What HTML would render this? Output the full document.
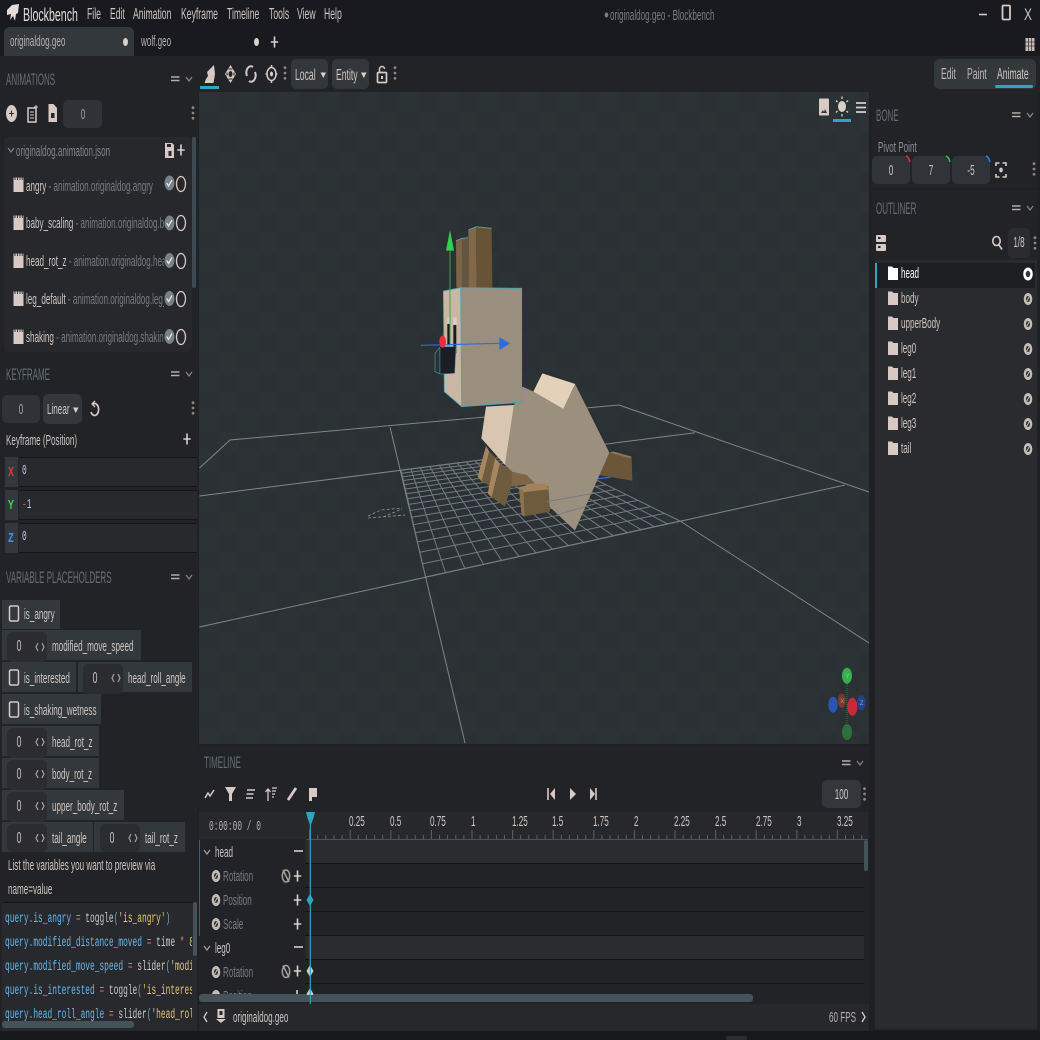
<!DOCTYPE html>
<html><head><meta charset="utf-8"><style>
html,body{margin:0;padding:0;width:1040px;height:1040px;overflow:hidden;background:#1e2023}
*{box-sizing:border-box}
.b{position:absolute}
.t{position:absolute;white-space:nowrap;height:20px;margin-top:1px;font:16px/20px "Liberation Sans",sans-serif;color:#cfc6c0;transform:scaleX(.54);transform-origin:0 0}
.h{margin-top:0;font-size:17px;color:#666e74;transform:scaleX(.47)}
.g{color:#757c81}
.s{font-size:15px}
.c{text-align:center;width:40px;transform-origin:50% 0}
.m{margin-top:2px;font:13.5px/20px "Liberation Mono",monospace;transform:scaleX(.583)}
.q{color:#6cb6e8}.o{color:#e0707c}.f{color:#c9c9c6}.p{color:#6fa9b8}.y{color:#e3c578}
</style></head><body>
<div class="b" style="left:0;top:0;width:1040px;height:56px;background:#181a1f"></div>
<div class="b" style="left:4px;top:27px;width:130px;height:29px;background:#33383d;border-radius:6px 6px 0 0"></div>
<div class="b" style="left:0;top:56px;width:1040px;height:36px;background:#212326"></div>
<div class="b" style="left:0;top:92px;width:198px;height:940px;background:#212326"></div>
<div class="b" style="left:199px;top:92px;width:670px;height:652px;background-color:#2a3033;background-image:repeating-conic-gradient(#2a3033 0 25%,#2c3334 0 50%);background-size:40px 40px;background-position:0 0"></div>
<div class="b" style="left:199px;top:746px;width:670px;height:286px;background:#212326"></div>
<div class="b" style="left:871px;top:92px;width:166px;height:96px;background:#212326"></div>
<div class="b" style="left:871px;top:190px;width:166px;height:70px;background:#212326"></div>
<div class="b" style="left:875px;top:260px;width:162px;height:769px;background:#292b2e"></div>
<div class="b" style="left:875px;top:263px;width:160px;height:25px;background:#1c1e21"></div>
<div class="b" style="left:875px;top:263px;width:2px;height:25px;background:#2ea6c0"></div>

<div class="b" style="left:291px;top:59px;width:37px;height:30px;background:#33373b;border-radius:5px"></div>
<div class="b" style="left:332px;top:59px;width:37px;height:30px;background:#33373b;border-radius:5px"></div>
<div class="b" style="left:934px;top:59px;width:102px;height:30px;background:#33383b;border-radius:5px"></div>
<div class="b" style="left:995px;top:85px;width:38px;height:3px;background:#2ea6c0;border-radius:2px"></div>
<div class="b" style="left:200px;top:86px;width:19px;height:3px;background:#2ea6c0"></div>
<div class="b" style="left:63px;top:100px;width:39px;height:28px;background:#2f3236;border-radius:5px"></div>
<div class="b" style="left:4px;top:137px;width:188px;height:215px;background:#26282c;border-radius:4px"></div>
<div class="b" style="left:192px;top:137px;width:4px;height:151px;background:#3e4a52;border-radius:2px"></div>

<div class="b" style="left:2px;top:395px;width:38px;height:28px;background:#2f3236;border-radius:5px"></div>
<div class="b" style="left:43px;top:394px;width:39px;height:30px;background:#33373b;border-radius:5px"></div>
<div class="b" style="left:5px;top:457px;width:13px;height:30px;background:#33383c"></div>
<div class="b" style="left:5px;top:490px;width:13px;height:30px;background:#33383c"></div>
<div class="b" style="left:5px;top:523px;width:13px;height:30px;background:#33383c"></div>
<div class="b" style="left:19px;top:457px;width:178px;height:30px;background:#27292d;border-top:1px solid #141518;border-bottom:1px solid #141518"></div>
<div class="b" style="left:19px;top:490px;width:178px;height:30px;background:#27292d;border-top:1px solid #141518;border-bottom:1px solid #141518"></div>
<div class="b" style="left:19px;top:523px;width:178px;height:30px;background:#27292d;border-top:1px solid #141518;border-bottom:1px solid #141518"></div>

<div class="b" style="left:2px;top:600px;width:58px;height:29px;background:#33383c"></div>
<div class="b" style="left:2px;top:630px;width:139px;height:30px;background:#33383c"></div>
<div class="b" style="left:2px;top:662px;width:74px;height:30px;background:#33383c"></div>
<div class="b" style="left:78px;top:662px;width:114px;height:30px;background:#33383c"></div>
<div class="b" style="left:2px;top:694px;width:99px;height:30px;background:#33383c"></div>
<div class="b" style="left:2px;top:726px;width:97px;height:30px;background:#33383c"></div>
<div class="b" style="left:2px;top:758px;width:97px;height:30px;background:#33383c"></div>
<div class="b" style="left:2px;top:790px;width:122px;height:30px;background:#33383c"></div>
<div class="b" style="left:2px;top:822px;width:91px;height:30px;background:#33383c"></div>
<div class="b" style="left:94px;top:822px;width:91px;height:30px;background:#33383c"></div>
<div class="b" style="left:7px;top:632px;width:40px;height:30px;background:#2a2c30;border-radius:5px"></div>
<div class="b" style="left:83px;top:664px;width:40px;height:30px;background:#2a2c30;border-radius:5px"></div>
<div class="b" style="left:7px;top:728px;width:40px;height:30px;background:#2a2c30;border-radius:5px"></div>
<div class="b" style="left:7px;top:760px;width:40px;height:30px;background:#2a2c30;border-radius:5px"></div>
<div class="b" style="left:7px;top:792px;width:40px;height:30px;background:#2a2c30;border-radius:5px"></div>
<div class="b" style="left:7px;top:824px;width:40px;height:28px;background:#2a2c30;border-radius:5px"></div>
<div class="b" style="left:100px;top:824px;width:40px;height:28px;background:#2a2c30;border-radius:5px"></div>

<div class="b" style="left:2px;top:902px;width:195px;height:130px;background:#27292d;border-top:1px solid #141518"></div>
<div class="b" style="left:193px;top:902px;width:4px;height:54px;background:#46525a;border-radius:2px"></div>
<div class="b" style="left:2px;top:1021px;width:132px;height:7px;background:#46525a;border-radius:3px"></div>

<div class="b" style="left:822px;top:780px;width:39px;height:28px;background:#33373b;border-radius:5px"></div>
<div class="b" style="left:199px;top:812px;width:669px;height:27px;background:#26282c"></div>
<div class="b" style="left:306px;top:839px;width:562px;height:1px;background:#4a5158"></div>
<div class="b" style="left:199px;top:840px;width:107px;height:164px;background:#212326"></div>
<div class="b" style="left:305px;top:840px;width:559px;height:23px;background:#2a2c30"></div>
<div class="b" style="left:305px;top:935px;width:559px;height:24px;background:#2a2c30"></div>
<div class="b" style="left:305px;top:863px;width:559px;height:1px;background:#121316"></div>
<div class="b" style="left:305px;top:887px;width:559px;height:1px;background:#121316"></div>
<div class="b" style="left:305px;top:911px;width:559px;height:1px;background:#121316"></div>
<div class="b" style="left:305px;top:935px;width:559px;height:1px;background:#121316"></div>
<div class="b" style="left:305px;top:959px;width:559px;height:1px;background:#121316"></div>
<div class="b" style="left:305px;top:983px;width:559px;height:1px;background:#121316"></div>
<div class="b" style="left:199px;top:840px;width:1px;height:96px;background:#1f6c7c"></div>
<div class="b" style="left:864px;top:840px;width:4px;height:31px;background:#46525a;border-radius:2px"></div>
<div class="b" style="left:199px;top:1004px;width:670px;height:27px;background:#26282c"></div>
<div class="b" style="left:0;top:1031px;width:1040px;height:9px;background:#17181b"></div>
<div class="b" style="left:726px;top:1036px;width:21px;height:4px;background:#2a2c2f;border-radius:2px 2px 0 0"></div>
<div class="b" style="left:872px;top:156px;width:38px;height:28px;background:#303337;border-radius:5px"></div>
<div class="b" style="left:912px;top:156px;width:38px;height:28px;background:#303337;border-radius:5px"></div>
<div class="b" style="left:952px;top:156px;width:38px;height:28px;background:#303337;border-radius:5px"></div>
<div class="b" style="left:1008px;top:228px;width:22px;height:30px;background:#2a2c30;border-radius:5px"></div>

<svg class="b" style="left:0;top:0" width="1040" height="1040" viewBox="0 0 1040 1040">
<defs>
<g id="dots" fill="#8d8580"><circle cx="0" cy="-5.300" r="1.400"/><circle cx="0" cy="0" r="1.400"/><circle cx="0" cy="5.300" r="1.400"/></g>
<g id="hd" fill="none" stroke="#b5aca6"><path d="M0-2H8.500M0 1.500H8.500" stroke-width="1.600"/><path d="M15-2l3 4L21-2" stroke-width="1.200" stroke="#8d8680"/></g>
<path id="plus" d="M-3.700 0H3.700M0-5.500V5.500" stroke="#d8d0ca" stroke-width="1.600" fill="none"/>
<g id="chk"><ellipse rx="5" ry="7.500" fill="#788188"/><path d="M-2.800 0l1.800 3 3.500-6" stroke="#dfe3e4" stroke-width="1.300" fill="none"/></g>
<ellipse id="rng" rx="4.500" ry="7.500" fill="none" stroke="#d8c9c4" stroke-width="1.300"/>
<g id="clap"><rect x="-5" y="-6.500" width="10" height="14.500" fill="#d8c9c4"/><path d="M-3.500-7v3M-1-7v3M1.500-7v3M3.800-7v3" stroke="#26282c" stroke-width=".9"/></g>
<g id="eyeb"><ellipse rx="4.300" ry="6" fill="#c5bdb7"/><ellipse rx="2.100" ry="3" fill="#33363a"/><path d="M-1.300 2L1.500-2.500" stroke="#c5bdb7"/></g>
<path id="fold" d="M0-6.500H4L5.500-5H10V7H0Z" fill="#d8c9c4"/>
<rect id="cb" x="-4.500" y="-7.500" width="9" height="15" rx="1.500" fill="none" stroke="#d8c9c4" stroke-width="1.500"/>
<path id="ang" d="M-2-4l-2 4 2 4M2-4l2 4-2 4" stroke="#a8a09b" stroke-width="1.200" fill="none"/>
</defs>

<g fill="none" stroke="#7f8686" stroke-width="1">
<path d="M199.500 468L230 440L619 405L869 492"/>
<path d="M199.500 496L695 432.700"/>
<path d="M199.500 627L845 485"/>
<path d="M390 427L465 743"/>
<path d="M680 521L869 643"/>
<path d="M368 516L381 510L402 508M368 518L405 515M383 517L402 509" stroke="#8f9596" stroke-dasharray="3 2" stroke-width=".8"/>
</g>
<g id="grid" fill="none" stroke="#717b80" stroke-width="1"></g>

<g transform="translate(380 210) scale(.33333)">
<polygon points="318,708 293,800 305,815 328,725" fill="#a5865f"/>
<polygon points="328,725 305,815 335,830 350,745" fill="#6e5a3c"/>
<polygon points="345,745 323,850 335,862 360,760" fill="#a5865f"/>
<polygon points="360,760 335,862 375,890 385,855 410,790" fill="#6e5a3c"/>
<polygon points="688,728 755,742 757,812 655,795" fill="#6b5638"/>
<polygon points="688,728 700,724 755,740 750,745" fill="#8c7450"/>
<path d="M650 806L692 802" stroke="#2d6be0" stroke-width="4"/>
<polygon points="402,585 428,530 460,545 550,597 586,524 688,728 585,962 375,765" fill="#9b8f7e"/>
<polygon points="318,590 402,585 375,765 304,685" fill="#d8c6b0"/>
<polygon points="487,490 586,522 550,597 460,545" fill="#e3d2b9"/>
<polygon points="395,785 440,795 465,820 430,825 395,830" fill="#7d6545"/>
<polygon points="417,835 505,828 510,905 430,920" fill="#6e5a3c"/>
<polygon points="417,834 440,825 495,820 507,838 420,848" fill="#a0835d"/>
<polygon points="417,835 430,840 434,920 425,915" fill="#8c7350"/>
<path d="M500 875L640 850M530 915L650 880" stroke="#717b80" stroke-width="2.500" fill="none"/>
<polygon points="228,92 247,85 247,233 229,233" fill="#7a6548"/>
<polygon points="247,85 264,83 266,233 247,233" fill="#655540"/>
<polygon points="265,60 288,50 290,233 266,232" fill="#806848"/>
<polygon points="288,50 335,55 337,233 290,233" fill="#675335"/>
<path d="M228 92L247 85L264 83M265 60L288 50L335 55" stroke="#4ca5b5" stroke-width="2.500" fill="none"/>
<polygon points="190,243 242,233 245,590 193,545" fill="#c9b7a3"/>
<polygon points="242,233 425,235 425,577 245,590" fill="#9a8f7e"/>
<path d="M190 243L242 233L425 235L425 577L245 590L193 545ZM242 233L245 590" stroke="#44a8ba" stroke-width="2.500" fill="none"/>
<rect x="202" y="322" width="8" height="22" fill="#cfcfcf"/><rect x="202" y="342" width="8" height="64" fill="#191b1f"/>
<rect x="220" y="322" width="10" height="24" fill="#cfcfcf"/><rect x="220" y="345" width="9" height="85" fill="#191b1f"/>
<polygon points="165,430 180,412 180,492 165,485" fill="#2a3236" stroke="#3a97a8" stroke-width="2"/>
<polygon points="180,410 228,410 224,490 180,492" fill="#1b1e23" stroke="#3a97a8" stroke-width="1.500"/>
<path d="M210 120V400" stroke="#2fae45" stroke-width="3"/>
<polygon points="210,60 198,122 222,122" fill="#2fd24e"/>
<path d="M122 406L360 400" stroke="#2d6be0" stroke-width="3.500"/>
<polygon points="358,382 390,400 358,420" fill="#2d6be0"/>
<ellipse cx="188" cy="395" rx="10" ry="18" fill="#ee2c40"/>
</g>

<g>
<path d="M847 684V724" stroke="#2e7a3a" stroke-width="1" stroke-dasharray="1 1"/>
<ellipse cx="847" cy="675.700" rx="5" ry="8" fill="#35b04a"/>
<ellipse cx="847" cy="732" rx="5" ry="8" fill="#2f6f3a"/>
<ellipse cx="833" cy="704.700" rx="4.700" ry="8" fill="#2b56b0"/>
<ellipse cx="861.300" cy="702.700" rx="4.300" ry="7.500" fill="#25418c"/>
<ellipse cx="841.700" cy="700.700" rx="4" ry="7" fill="#7a3a30"/>
<ellipse cx="852.300" cy="706.700" rx="5" ry="9" fill="#c42a3a"/>
<text x="845.500" y="678" font-family="Liberation Sans" font-size="6" fill="#8fcb9c">Y</text>
<text x="859.800" y="705" font-family="Liberation Sans" font-size="6" fill="#8fa3d8">Z</text>
<text x="840.300" y="703" font-family="Liberation Sans" font-size="6" fill="#b8988a">X</text>
</g>

<!-- title bar icons -->
<path d="M7 10l5-5 7-1-1 9-2 1-1 7-2-5-3 4 1-6-4 1z" fill="#e4dcd8"/>
<path d="M979 14.500H987" stroke="#d8c9c4" stroke-width="1.600"/>
<rect x="1002.500" y="5.500" width="7.500" height="14" rx="1" fill="none" stroke="#d8c9c4" stroke-width="1.800"/>
<ellipse cx="125.500" cy="42" rx="2.500" ry="4" fill="#d8d0ca"/>
<ellipse cx="256.500" cy="42" rx="2.500" ry="4" fill="#d8d0ca"/>
<use href="#plus" x="274.500" y="42"/>
<ellipse cx="606.500" cy="15" rx="1.800" ry="2.500" fill="#777f85"/>
<g fill="#c9bcb6"><rect x="1025.500" y="38" width="9" height="13"/><path d="M1028.500 38v13M1031.500 38v13M1025.500 42h9M1025.500 46h9" stroke="#3a3a3e" stroke-width=".8"/></g>

<!-- toolbar icons -->
<path d="M204.500 83h9l1.500-9-1-9-4 4-3 3 1 4-2 3z" fill="#d8c9c4"/>
<g transform="translate(230.500 74)"><path d="M0-9L5.500 0L0 9L-5.500 0Z" fill="#d8c9c4"/><ellipse rx="2" ry="3" fill="#212326"/><path d="M-2-5L2-5M-2 5L2 5M-3.500-1.500V1.500M3.500-1.500V1.500" stroke="#212326"/></g>
<g transform="translate(251 74)" fill="none" stroke="#d8c9c4" stroke-width="2"><path d="M-4 2A4.500 6.500 0 0 1 2-7"/><path d="M4-2A4.500 6.500 0 0 1-2 7"/></g>
<g transform="translate(271.500 74)" fill="none" stroke="#d8c9c4" stroke-width="1.600"><ellipse rx="4.500" ry="6.500"/><ellipse rx="1.600" ry="2.500" fill="#d8c9c4" stroke="none"/><path d="M0-9V-6.500M0 6.500V9M-6 0H-4.500M4.500 0H6"/></g>
<use href="#dots" x="285" y="73"/>
<use href="#dots" x="395" y="73"/>
<path d="M320.500 72.500h5.500l-2.700 5.500zM361 72.500h5.500l-2.700 5.500z" fill="#d8d0ca"/>
<g transform="translate(382 76)"><rect x="-4.500" y="-3.500" width="9" height="10" rx="1" fill="none" stroke="#d8c9c4" stroke-width="1.700"/><path d="M-2.500-4V-7A2.500 2.500 0 0 1 2.500-7" fill="none" stroke="#d8c9c4" stroke-width="1.500"/><rect x="-1" y="0" width="2" height="3" fill="#d8c9c4"/></g>

<!-- viewport icons -->
<g transform="translate(824 107)"><rect x="-5" y="-8.500" width="10" height="17" rx="1" fill="#d8c9c4"/><path d="M-3 6L-1 3L0 5L1 2L3 6Z" fill="#33363a"/></g>
<g transform="translate(842 106.500)"><ellipse rx="4" ry="5.500" fill="#d8d0ca"/><path d="M0-10V-7.500M0 7.500V10M-6-6l1.500 1.500M6-6l-1.500 1.500M-6 6l1.500-1.500M6 6l-1.500-1.500" stroke="#d8d0ca" stroke-width="1.300"/></g>
<path d="M833 120.500H851" stroke="#2ea6c0" stroke-width="3"/>
<path d="M856 103H866M856 107.500H866M856 112H866" stroke="#d8d0ca" stroke-width="1.700"/>

<!-- heading icons -->
<use href="#hd" x="171" y="79"/><use href="#hd" x="171" y="374"/><use href="#hd" x="171" y="577"/>
<use href="#hd" x="1012" y="115"/><use href="#hd" x="1012" y="208"/><use href="#hd" x="842" y="763"/>

<!-- animations -->
<ellipse cx="11.500" cy="113.500" rx="5.500" ry="8.500" fill="#d8c9c4"/><path d="M9 113.500h5M11.500 110.500v6" stroke="#26282c" stroke-width="1"/>
<g transform="translate(32 114)"><rect x="-4" y="-6" width="8" height="14" fill="none" stroke="#d8c9c4" stroke-width="1.500"/><path d="M-2-2h4M-2 1h4M-2 4h4" stroke="#d8c9c4"/><path d="M2-7h4M4-9v4" stroke="#d8c9c4"/></g>
<path d="M48.500 104h5l3.500 4v14h-8.500z" fill="#d8c9c4"/><rect x="51" y="113" width="3.500" height="5" fill="#26282c"/>
<use href="#dots" x="193" y="113"/>
<path d="M8 148l3 4 3-4" fill="none" stroke="#7e858a" stroke-width="1.100"/>
<g transform="translate(169.500 150)"><path d="M-4.500-7h7l2 2v13h-9z" fill="#d8c9c4"/><rect x="-1" y="1" width="3" height="5" fill="#26282c"/><rect x="-2.500" y="-6" width="4" height="3" fill="#26282c"/></g>
<use href="#plus" x="181" y="150"/>
<use href="#clap" x="18.500" y="184"/><use href="#chk" x="169.500" y="183"/><use href="#rng" x="181" y="184"/>
<use href="#clap" x="18.500" y="222"/><use href="#chk" x="169.500" y="223"/><use href="#rng" x="181" y="223"/>
<use href="#clap" x="18.500" y="260"/><use href="#chk" x="169.500" y="260.500"/><use href="#rng" x="181" y="261"/>
<use href="#clap" x="18.500" y="298"/><use href="#chk" x="169.500" y="298.500"/><use href="#rng" x="181" y="299"/>
<use href="#clap" x="18.500" y="336"/><use href="#chk" x="169.500" y="336.500"/><use href="#rng" x="181" y="337"/>

<!-- keyframe -->
<use href="#dots" x="193" y="408"/>
<path d="M73 407.500h5.500l-2.700 5.500z" fill="#d8d0ca"/>
<g transform="translate(95 410)" fill="none" stroke="#d8c9c4" stroke-width="1.700"><path d="M-2-6A4 6 0 1 1-4 2"/><path d="M0-9L-3-6L0-3" stroke-width="1.300"/></g>
<use href="#plus" x="187" y="439"/>

<!-- variables icons -->
<use href="#cb" x="14" y="613.500"/><use href="#cb" x="14" y="677.500"/><use href="#cb" x="14" y="709.500"/>
<use href="#ang" x="40" y="647"/><use href="#ang" x="116" y="678"/><use href="#ang" x="40" y="742"/><use href="#ang" x="40" y="774"/><use href="#ang" x="40" y="806"/><use href="#ang" x="40" y="838"/><use href="#ang" x="133" y="838"/>

<!-- timeline toolbar -->
<path d="M205 798l3-5 2 3 4-6" fill="none" stroke="#d8c9c4" stroke-width="1.500"/>
<path d="M225 787h11l-4 7v7l-3 0v-7z" fill="#d8c9c4"/>
<path d="M247 790h8M246.500 794h7M246 798h7" stroke="#d8c9c4" stroke-width="1.400"/>
<path d="M268 789v12M265.500 792l2.500-3 2.500 3M272 788h5M272 791h4M272 794h3M272 797h2" stroke="#d8c9c4" stroke-width="1.300" fill="none"/>
<path d="M288 800l8-12" stroke="#d8c9c4" stroke-width="2.800"/>
<path d="M309 788h8v9h-5v4h-3z" fill="#d8c9c4"/>
<path d="M548 788v12" stroke="#d8c9c4" stroke-width="1.600"/><path d="M555 788l-5 6 5 6z" fill="#d8c9c4"/>
<path d="M570 788l6 6-6 6z" fill="#d8c9c4"/>
<path d="M596 788v12" stroke="#d8c9c4" stroke-width="1.600"/><path d="M590 788l5 6-5 6z" fill="#d8c9c4"/>
<use href="#dots" x="864.500" y="794"/>
<path id="ticks" fill="none" stroke="#5a6167"></path>

<!-- timeline rows -->
<path d="M204 850l3 4 3-4M204 946l3 4 3-4" fill="none" stroke="#a8a09b" stroke-width="1.200"/>
<path d="M294 851h9M294 947h9" stroke="#c8c0ba" stroke-width="1.700"/>
<use href="#eyeb" x="216" y="876"/><use href="#eyeb" x="216" y="900"/><use href="#eyeb" x="216" y="924"/><use href="#eyeb" x="216" y="972"/>
<use href="#plus" x="297.500" y="876"/><use href="#plus" x="297.500" y="900"/><use href="#plus" x="297.500" y="924"/><use href="#plus" x="297.500" y="971"/>
<g transform="translate(286 876)"><ellipse rx="3.700" ry="6" fill="none" stroke="#a8a09b" stroke-width="1.500"/><path d="M-3-6L3 6" stroke="#a8a09b" stroke-width="1.500"/></g>
<g transform="translate(286 971.500)"><ellipse rx="3.700" ry="6" fill="none" stroke="#a8a09b" stroke-width="1.500"/><path d="M-3-6L3 6" stroke="#a8a09b" stroke-width="1.500"/></g>
<path d="M297 990v4" stroke="#d8d0ca" stroke-width="1.600"/>
<ellipse cx="216" cy="996" rx="4.300" ry="6" fill="#c5bdb7"/>
<rect x="199" y="994" width="110" height="10" fill="#212326"/>
<rect x="199" y="994" width="554" height="8" rx="3" fill="#46525a"/>
<path d="M310 894l3.500 6-3.500 6-3.500-6z" fill="#2ea6c0"/>
<path d="M310 965l3.500 6-3.500 6-3.500-6z" fill="#d8c9c4"/>
<path d="M310 988l3.500 6-1 1h-5l-1-1z" fill="#d8c9c4"/>
<path d="M310.300 820V1004" stroke="#2ea6c0" stroke-width="1.200"/>
<path d="M306 812h9l-1.500 6-3 8-3-8z" fill="#2ea6c0"/>

<!-- status -->
<path d="M207 1012l-3 5 3 5M862 1012l3 5-3 5" fill="none" stroke="#d8d0ca" stroke-width="1.300"/>
<g transform="translate(221 1016)" fill="#d8c9c4"><rect x="-3.500" y="-7" width="7" height="9"/><rect x="-1.500" y="-5" width="3" height="4" fill="#26282c"/><path d="M-5 3h10l-5 4z"/></g>

<!-- right panel icons -->
<use href="#dots" x="1034" y="169"/><use href="#dots" x="1035" y="243"/>
<g transform="translate(1001 170)" fill="none" stroke="#d8c9c4" stroke-width="1.600"><path d="M-5-4V-7H-1.500M1.500-7H5V-4M-5 4V7H-1.500M1.500 7H5V4"/><ellipse rx="1.800" ry="2.400" fill="#d8c9c4" stroke="none"/></g>
<path d="M906 156q3 1 4 6" stroke="#e03040" stroke-width="1.500" fill="none"/>
<path d="M946 156q3 1 4 6" stroke="#35c050" stroke-width="1.500" fill="none"/>
<path d="M986 156q3 1 4 6" stroke="#3080e0" stroke-width="1.500" fill="none"/>
<rect x="876" y="235" width="10" height="7" rx="1" fill="#d8c9c4"/><rect x="876" y="244" width="10" height="7" rx="1" fill="#d8c9c4"/>
<rect x="878" y="237" width="2.500" height="2" fill="#212326"/><rect x="878" y="246" width="2.500" height="2" fill="#212326"/>
<g transform="translate(997 242)" fill="none" stroke="#d8c9c4" stroke-width="1.600"><ellipse cx="-.5" cy="-1" rx="3.700" ry="4.500"/><path d="M2 3L5 7.500"/></g>
<path transform="translate(888 273)" d="M0-6.500H4L5.500-5H10V7H0Z" fill="#fff"/>
<use href="#fold" x="888" y="298"/><use href="#fold" x="888" y="323"/><use href="#fold" x="888" y="348"/><use href="#fold" x="888" y="373"/><use href="#fold" x="888" y="398"/><use href="#fold" x="888" y="423"/><use href="#fold" x="888" y="448"/>
<g transform="translate(1028 274)"><ellipse rx="4.800" ry="6.500" fill="#fff"/><ellipse rx="2.300" ry="3.200" fill="#33363a"/></g>
<use href="#eyeb" x="1028" y="299"/><use href="#eyeb" x="1028" y="324"/><use href="#eyeb" x="1028" y="349"/><use href="#eyeb" x="1028" y="374"/><use href="#eyeb" x="1028" y="399"/><use href="#eyeb" x="1028" y="424"/><use href="#eyeb" x="1028" y="449"/>
</svg>

<!-- title text -->
<span class="t" style="left:23px;top:4px;font-size:18px;color:#e2dcd8;transform:scaleX(.59)">Blockbench</span>
<span class="t" style="left:87px;top:4px">File</span>
<span class="t" style="left:110px;top:4px">Edit</span>
<span class="t" style="left:133px;top:4px">Animation</span>
<span class="t" style="left:181px;top:4px">Keyframe</span>
<span class="t" style="left:227px;top:4px">Timeline</span>
<span class="t" style="left:269px;top:4px">Tools</span>
<span class="t" style="left:297px;top:4px">View</span>
<span class="t" style="left:324px;top:4px">Help</span>
<span class="t s" style="left:610px;top:5px;color:#777f85">originaldog.geo - Blockbench</span>
<span class="t" style="left:1024px;top:4px;font-size:17px;transform:scaleX(.7)">X</span>
<span class="t s" style="left:10px;top:31px;color:#b5b0ac">originaldog.geo</span>
<span class="t s" style="left:141px;top:31px;color:#b5b0ac">wolf.geo</span>

<span class="t" style="left:295px;top:65px">Local</span>
<span class="t" style="left:336px;top:65px">Entity</span>
<span class="t" style="left:941px;top:64px;color:#bfb8b3">Edit</span>
<span class="t" style="left:967px;top:64px;color:#bfb8b3">Paint</span>
<span class="t" style="left:997px;top:64px">Animate</span>

<span class="t h" style="left:6px;top:70px">ANIMATIONS</span>
<span class="t c s" style="left:63px;top:104px;color:#a8a29d">0</span>
<span class="t s" style="left:16px;top:141px;color:#7e858a">originaldog.animation.json</span>

<div class="b" style="left:0;top:170px;width:164px;height:180px;overflow:hidden">
<span class="t s" style="left:26px;top:6px">angry <span class="g">- animation.originaldog.angry</span></span>
<span class="t s" style="left:26px;top:43px">baby_scaling <span class="g">- animation.originaldog.baby_scaling</span></span>
<span class="t s" style="left:26px;top:81px">head_rot_z <span class="g">- animation.originaldog.head_rot_z</span></span>
<span class="t s" style="left:26px;top:119px">leg_default <span class="g">- animation.originaldog.leg_default</span></span>
<span class="t s" style="left:26px;top:157px">shaking <span class="g">- animation.originaldog.shaking</span></span>
</div>

<span class="t h" style="left:6px;top:365px">KEYFRAME</span>
<span class="t c s" style="left:2px;top:399px;width:38px;color:#a8a29d">0</span>
<span class="t s" style="left:47px;top:399px">Linear</span>
<span class="t s" style="left:6px;top:430px">Keyframe (Position)</span>
<span class="t" style="left:8px;top:462px;font:bold 14px/20px 'Liberation Mono',monospace;color:#e8303f;transform:scaleX(.7)">X</span>
<span class="t" style="left:8px;top:495px;font:bold 14px/20px 'Liberation Mono',monospace;color:#3fd14f;transform:scaleX(.7)">Y</span>
<span class="t" style="left:8px;top:528px;font:bold 14px/20px 'Liberation Mono',monospace;color:#3f8fe8;transform:scaleX(.7)">Z</span>
<span class="t m" style="left:22px;top:460px;color:#b9c6e8">0</span>
<span class="t m" style="left:22px;top:494px;color:#b9c6e8"><span style="color:#e0505c">-</span>1</span>
<span class="t m" style="left:22px;top:526px;color:#b9c6e8">0</span>

<span class="t h" style="left:6px;top:568px">VARIABLE PLACEHOLDERS</span>
<span class="t s" style="left:24px;top:604px">is_angry</span>
<span class="t s" style="left:52px;top:636px">modified_move_speed</span>
<span class="t s" style="left:24px;top:668px">is_interested</span>
<span class="t s" style="left:128px;top:668px">head_roll_angle</span>
<span class="t s" style="left:24px;top:700px">is_shaking_wetness</span>
<span class="t s" style="left:52px;top:732px">head_rot_z</span>
<span class="t s" style="left:52px;top:764px">body_rot_z</span>
<span class="t s" style="left:52px;top:796px">upper_body_rot_z</span>
<span class="t s" style="left:52px;top:828px">tail_angle</span>
<span class="t s" style="left:145px;top:828px">tail_rot_z</span>
<span class="t c" style="left:-1px;top:636px;width:40px">0</span>
<span class="t c" style="left:75px;top:668px;width:40px">0</span>
<span class="t c" style="left:-1px;top:732px;width:40px">0</span>
<span class="t c" style="left:-1px;top:764px;width:40px">0</span>
<span class="t c" style="left:-1px;top:796px;width:40px">0</span>
<span class="t c" style="left:-1px;top:828px;width:40px">0</span>
<span class="t c" style="left:92px;top:828px;width:40px">0</span>
<span class="t s" style="left:8px;top:855px">List the variables you want to preview via</span>
<span class="t s" style="left:8px;top:879px">name=value</span>

<div class="b" style="left:0;top:902px;width:192px;height:122px;overflow:hidden">
<span class="t m" style="left:5px;top:6px"><span class="q">query.is_angry</span> <span class="o">=</span> <span class="f">toggle</span><span class="p">(</span><span class="y">'is_angry'</span><span class="p">)</span></span>
<span class="t m" style="left:5px;top:30px"><span class="q">query.modified_distance_moved</span> <span class="o">=</span> <span class="f">time</span> <span class="o">*</span> <span class="y">8</span></span>
<span class="t m" style="left:5px;top:54px"><span class="q">query.modified_move_speed</span> <span class="o">=</span> <span class="f">slider</span><span class="p">(</span><span class="y">'modified_move'</span></span>
<span class="t m" style="left:5px;top:78px"><span class="q">query.is_interested</span> <span class="o">=</span> <span class="f">toggle</span><span class="p">(</span><span class="y">'is_interested'</span></span>
<span class="t m" style="left:5px;top:102px"><span class="q">query.head_roll_angle</span> <span class="o">=</span> <span class="f">slider</span><span class="p">(</span><span class="y">'head_roll_angle'</span></span>
</div>

<span class="t h" style="left:204px;top:753px">TIMELINE</span>
<span class="t c s" style="left:822px;top:784px;width:39px">100</span>
<span class="t m" style="left:209px;top:816px;color:#b5aea9">0:00:00 / 0</span>
<span class="t s" style="left:349px;top:811px">0.25</span>
<span class="t s" style="left:390px;top:811px">0.5</span>
<span class="t s" style="left:430px;top:811px">0.75</span>
<span class="t s" style="left:471px;top:811px">1</span>
<span class="t s" style="left:512px;top:811px">1.25</span>
<span class="t s" style="left:552px;top:811px">1.5</span>
<span class="t s" style="left:593px;top:811px">1.75</span>
<span class="t s" style="left:634px;top:811px">2</span>
<span class="t s" style="left:674px;top:811px">2.25</span>
<span class="t s" style="left:715px;top:811px">2.5</span>
<span class="t s" style="left:756px;top:811px">2.75</span>
<span class="t s" style="left:797px;top:811px">3</span>
<span class="t s" style="left:837px;top:811px">3.25</span>

<span class="t s" style="left:215px;top:842px">head</span>
<span class="t s g" style="left:223px;top:866px">Rotation</span>
<span class="t s g" style="left:223px;top:890px">Position</span>
<span class="t s g" style="left:223px;top:914px">Scale</span>
<span class="t s" style="left:215px;top:938px">leg0</span>
<span class="t s g" style="left:223px;top:962px">Rotation</span>
<div class="b" style="left:200px;top:984px;width:100px;height:10px;overflow:hidden"><span class="t s g" style="left:23px;top:2px">Position</span></div>
<span class="t s" style="left:233px;top:1007px">originaldog.geo</span>
<span class="t s" style="left:829px;top:1007px;color:#b5aea9">60 FPS</span>

<span class="t h" style="left:876px;top:106px">BONE</span>
<span class="t s" style="left:878px;top:137px;color:#8a8f93">Pivot Point</span>
<span class="t c s" style="left:872px;top:160px;width:38px">0</span>
<span class="t c s" style="left:912px;top:160px;width:38px">7</span>
<span class="t c s" style="left:952px;top:160px;width:38px">-5</span>
<span class="t h" style="left:876px;top:199px">OUTLINER</span>
<span class="t c s" style="left:1008px;top:232px;width:22px">1/8</span>
<span class="t s" style="left:901px;top:263px;color:#fff">head</span>
<span class="t s" style="left:901px;top:288px">body</span>
<span class="t s" style="left:901px;top:313px">upperBody</span>
<span class="t s" style="left:901px;top:338px">leg0</span>
<span class="t s" style="left:901px;top:363px">leg1</span>
<span class="t s" style="left:901px;top:388px">leg2</span>
<span class="t s" style="left:901px;top:413px">leg3</span>
<span class="t s" style="left:901px;top:438px">tail</span>

<script>
(function(){
var x0=401,y0=470,x1=540,y1=452.5,x2=680,y2=521,x3=425.5,y3=577;
var dx1=x1-x2,dx2=x3-x2,sx=x0-x1+x2-x3,dy1=y1-y2,dy2=y3-y2,sy=y0-y1+y2-y3;
var D=dx1*dy2-dx2*dy1,g=(sx*dy2-dx2*sy)/D,h=(dx1*sy-sx*dy1)/D;
var a=x1-x0+g*x1,b=x3-x0+h*x3,d=y1-y0+g*y1,e=y3-y0+h*y3;
function P(u,v){var w=g*u+h*v+1;return ((a*u+b*v+x0)/w).toFixed(1)+' '+((d*u+e*v+y0)/w).toFixed(1);}
var s='',n=16;
for(var i=0;i<=n;i++){s+='M'+P(i/n,0)+'L'+P(i/n,1)+'M'+P(0,i/n)+'L'+P(1,i/n);}
var el=document.createElementNS('http://www.w3.org/2000/svg','path');el.setAttribute('d',s);
document.getElementById('grid').appendChild(el);
var t='';
for(var k=0;k<70;k++){var x=309.6+k*8.12;if(x>866)break;t+='M'+x.toFixed(1)+' '+(k%5==0?830:835)+'V839';}
document.getElementById('ticks').setAttribute('d',t);
})();
</script>
</body></html>
